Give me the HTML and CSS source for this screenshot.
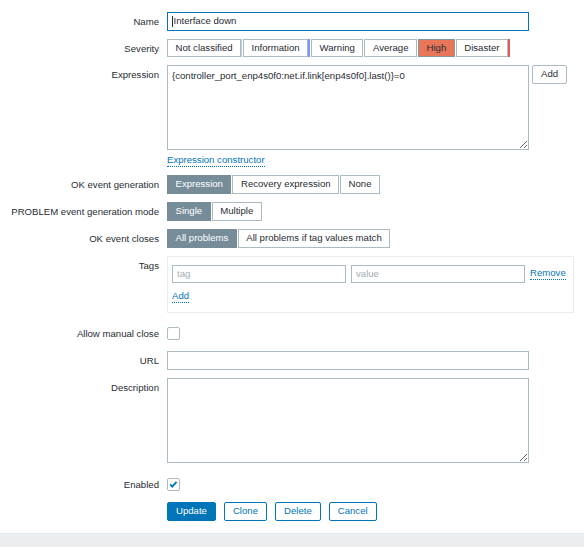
FILE: index.html
```html
<!DOCTYPE html>
<html>
<head>
<meta charset="utf-8">
<link rel="stylesheet" href="styles.css">
</head>
<body>
<div class="form">
  <div class="lbl">Name</div>
  <div class="ctl"><div class="input focus"><span class="caret"></span>Interface down</div></div>

  <div class="lbl">Severity</div>
  <div class="ctl">
    <div class="seg-group sev">
      <span class="seg s-na">Not classified</span>
      <span class="seg s-info">Information</span>
      <span class="seg s-warn">Warning</span>
      <span class="seg s-avg">Average</span>
      <span class="seg s-high on-high">High</span>
      <span class="seg s-dis">Disaster</span>
    </div>
  </div>

  <div class="lbl">Expression</div>
  <div class="ctl">
    <div class="expr-row">
      <textarea class="ta expr">{controller_port_enp4s0f0:net.if.link[enp4s0f0].last()}=0</textarea>
      <button class="btn-alt">Add</button>
    </div>
    <a class="link expr-link">Expression constructor</a>
  </div>

  <div class="lbl">OK event generation</div>
  <div class="ctl">
    <div class="seg-group">
      <span class="seg on">Expression</span>
      <span class="seg">Recovery expression</span>
      <span class="seg">None</span>
    </div>
  </div>

  <div class="lbl">PROBLEM event generation mode</div>
  <div class="ctl">
    <div class="seg-group">
      <span class="seg on">Single</span>
      <span class="seg">Multiple</span>
    </div>
  </div>

  <div class="lbl">OK event closes</div>
  <div class="ctl">
    <div class="seg-group">
      <span class="seg on">All problems</span>
      <span class="seg">All problems if tag values match</span>
    </div>
  </div>

  <div class="lbl">Tags</div>
  <div class="ctl tags-ctl">
    <div class="tags-box">
      <div class="tag-row">
        <div class="input tag-input ph">tag</div>
        <div class="input tag-input ph">value</div>
        <a class="link">Remove</a>
      </div>
      <a class="link tag-add">Add</a>
    </div>
  </div>

  <div class="lbl">Allow manual close</div>
  <div class="ctl"><div class="cb"></div></div>

  <div class="lbl">URL</div>
  <div class="ctl"><div class="input"></div></div>

  <div class="lbl">Description</div>
  <div class="ctl"><textarea class="ta desc"></textarea></div>

  <div class="lbl">Enabled</div>
  <div class="ctl">
    <div class="cb checked">
      <svg width="11" height="11" viewBox="0 0 11 11"><path d="M2.2 5.4 L4.4 7.6 L8.8 2.8" fill="none" stroke="#0275b8" stroke-width="2"/></svg>
    </div>
  </div>

  <div class="lbl"></div>
  <div class="ctl buttons">
    <button class="btn primary">Update</button>
    <button class="btn">Clone</button>
    <button class="btn">Delete</button>
    <button class="btn">Cancel</button>
  </div>
</div>
<div class="footer"></div>
</body>
</html>
```

FILE: styles.css
```css
html, body {
  margin: 0;
  overflow: hidden;
}
body {
  font-family: "Liberation Sans", Arial, sans-serif;
  font-size: 9.6px;
  color: #1f2c33;
  background: #ffffff;
}
.form {
  display: grid;
  grid-template-columns: 159px 407px;
  column-gap: 8px;
  row-gap: 8px;
  padding-top: 12px;
  align-items: start;
}
.lbl {
  text-align: right;
  line-height: 18.7px;
  white-space: nowrap;
  padding-top: 1px;
  margin-bottom: -1px;
}
.ctl {
  line-height: normal;
}
.input {
  width: 362px;
  height: 18.7px;
  box-sizing: border-box;
  border: 1px solid #acbbc2;
  background: #fff;
  padding: 0 4px;
  line-height: 16.7px;
  white-space: nowrap;
  overflow: hidden;
}
.input.focus {
  border-color: #0275b8;
  display: flex;
  align-items: center;
}
.caret {
  display: inline-block;
  width: 1px;
  height: 11px;
  background: #1f2c33;
  margin-right: 0.5px;
}
.ph {
  color: #a3adb3;
}
.seg-group {
  display: flex;
  gap: 1px;
}
.seg {
  display: block;
  height: 18.7px;
  box-sizing: border-box;
  border: 1px solid #acbbc2;
  padding: 0 7.5px;
  line-height: 16.7px;
  background: #fff;
  white-space: nowrap;
}
.seg.on {
  background: #768d99;
  border-color: #768d99;
  color: #fff;
}
.sev .s-na { box-shadow: 1px 0 0 #c3ced4; margin-right: 1px; }
.sev .s-info { box-shadow: 2px 0 0 #7499ff; margin-right: 2px; }
.sev .s-dis { box-shadow: 2px 0 0 #e45959; }
.seg.on-high {
  background: #e97659;
  border-color: #8a979e;
  color: #1f2c33;
}
.expr-row {
  display: flex;
  align-items: flex-start;
  gap: 3px;
}
.ta {
  display: block;
  margin: 0;
  width: 362px;
  height: 85px;
  box-sizing: border-box;
  border: 1px solid #acbbc2;
  border-radius: 0;
  padding: 4px 4px;
  font-family: "Liberation Sans", Arial, sans-serif;
  font-size: 9.6px;
  line-height: 12px;
  color: #1f2c33;
  resize: vertical;
  outline: none;
}
.ta.desc {
  margin-bottom: 4px;
}
.btn-alt {
  height: 18.7px;
  box-sizing: border-box;
  border: 1px solid #acbbc2;
  border-radius: 2px;
  background: #fff;
  color: #1f2c33;
  padding: 0 8px;
  font-family: inherit;
  font-size: 9.6px;
  line-height: 16.7px;
  margin: 0;
}
.link {
  color: #0275b8;
  border-bottom: 1px dotted #0275b8;
  text-decoration: none;
  line-height: 12px;
}
.expr-link {
  display: block;
  width: max-content;
  margin-top: 4px;
}
.tags-ctl {
  margin-bottom: 3.4px;
}
.tags-box {
  width: 407px;
  box-sizing: border-box;
  border: 1px solid #ebeef0;
  padding: 8px 4px 8.6px 4px;
}
.tag-row {
  display: flex;
  align-items: center;
  gap: 5px;
}
.tag-input {
  width: 174px;
}
.tag-add {
  display: block;
  width: max-content;
  margin-top: 7px;
}
.cb {
  width: 12.7px;
  height: 12.7px;
  box-sizing: border-box;
  border: 1px solid #acbbc2;
  border-radius: 2px;
  margin-top: 3.3px;
  display: flex;
  align-items: center;
  justify-content: center;
}
.cb svg {
  display: block;
}
.buttons {
  display: flex;
  gap: 8px;
  margin-top: 1px;
}
.btn {
  height: 18.7px;
  box-sizing: border-box;
  border: 1px solid #0275b8;
  border-radius: 2px;
  background: #fff;
  color: #0275b8;
  padding: 0 8px;
  font-family: inherit;
  font-size: 9.6px;
  line-height: 16.7px;
  margin: 0;
}
.btn.primary {
  background: #0275b8;
  color: #fff;
}
.footer {
  margin-top: 12px;
  height: 30px;
  background: #ebeef0;
  border-top: 1px solid #e3e7ea;
}
```
